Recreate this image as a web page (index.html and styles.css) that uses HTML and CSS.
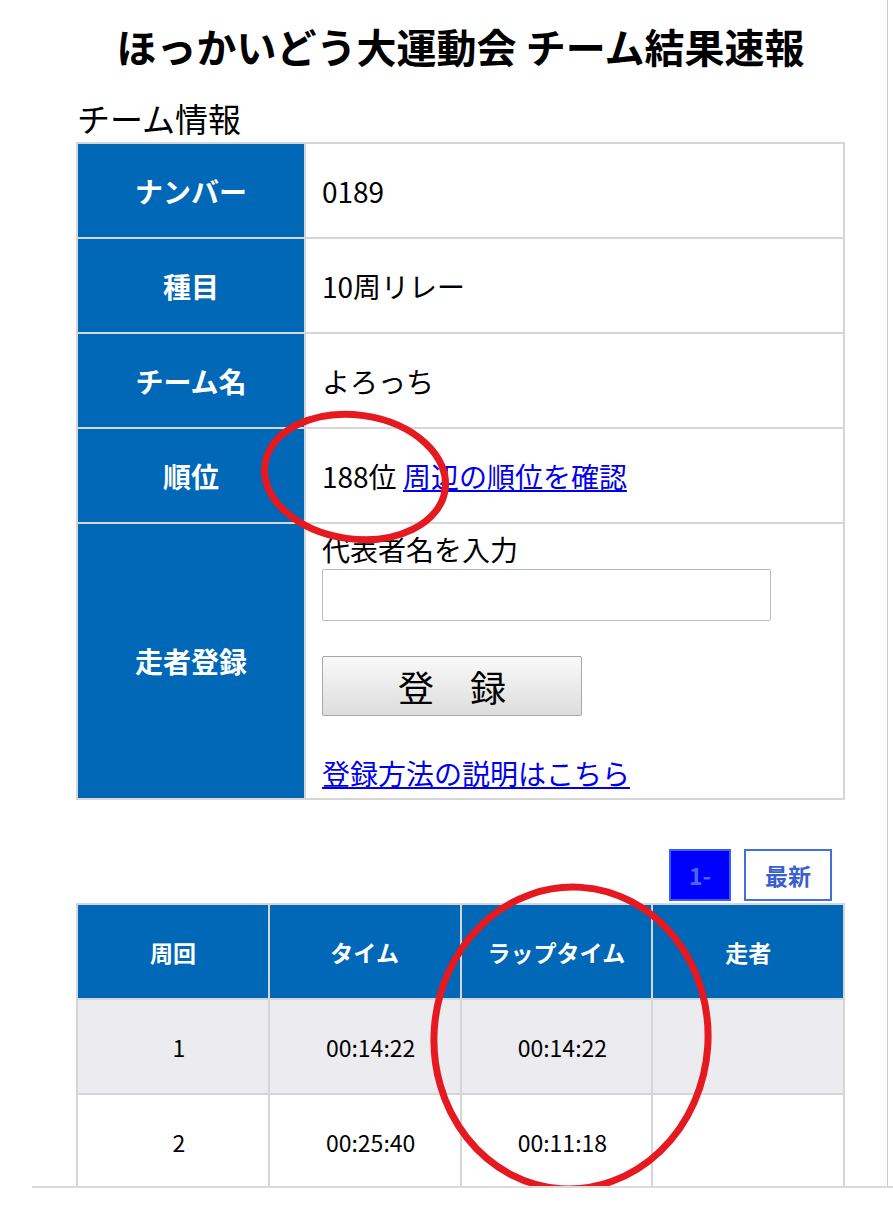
FILE: index.html
```html
<!DOCTYPE html>
<html lang="ja">
<head>
    <meta charset="UTF-8">
    <title>チーム結果速報</title>
    <link rel="stylesheet" href="styles.css">
</head>
<body>
    <div id="screen">
        <div id="wrap">
            <h1>ほっかいどう大運動会 チーム結果速報</h1>

            <h2>チーム情報</h2>
            <table class="info">
                <tr>
                    <th>ナンバー</th>
                    <td>0189</td>
                </tr>
                <tr>
                    <th>種目</th>
                    <td>10周リレー</td>
                </tr>
                <tr>
                    <th>チーム名</th>
                    <td>よろっち</td>
                </tr>
                <tr>
                    <th>順位</th>
                    <td>188位 <a href="#">周辺の順位を確認</a></td>
                </tr>
                <tr>
                    <th>走者登録</th>
                    <td class="entry">
                        <label for="runner">代表者名を入力</label>
                        <input type="text" id="runner">
                        <button>登　録</button>
                        <a href="#">登録方法の説明はこちら</a>
                    </td>
                </tr>
            </table>

            <div class="pager">
                <span class="page on">1-</span>
                <span class="page">最新</span>
            </div>

            <table class="laps">
                <tr>
                    <th>周回</th>
                    <th>タイム</th>
                    <th>ラップタイム</th>
                    <th>走者</th>
                </tr>
                <tr class="odd">
                    <td>1</td>
                    <td>00:14:22</td>
                    <td>00:14:22</td>
                    <td></td>
                </tr>
                <tr>
                    <td>2</td>
                    <td>00:25:40</td>
                    <td>00:11:18</td>
                    <td></td>
                </tr>
            </table>
        </div>

        <!-- 赤丸の書き込み -->
        <svg class="marks" width="887" height="1188" viewBox="0 0 887 1188">
            <ellipse cx="355" cy="477" rx="91" ry="62" transform="rotate(8 355 477)"/>
            <ellipse cx="571" cy="1038" rx="137" ry="151" transform="rotate(4 571 1038)"/>
        </svg>
    </div>
    <div class="bottom-line"></div>
</body>
</html>
```

FILE: styles.css
```css
body{
    margin: 0;
    font-family: "Noto Sans CJK JP", "Noto Sans", sans-serif;
    color: #000;
}

#screen{
    position: relative;
    width: 887px;
    height: 1188px;
    overflow: hidden;
    border-right: 1px solid #c8c8c8;
}

#wrap{
    width: 769px;
    margin-left: 76px;
}

h1{
    margin: 0;
    padding-top: 18px;
    font-size: 40px;
    line-height: 56px;
    text-align: center;
}

h2{
    margin: 24px 0 4px 1px;
    font-size: 33px;
    font-weight: normal;
    line-height: 40px;
}

table{
    width: 100%;
    border-collapse: collapse;
    border: 2px solid #d6d6d6;
}

th, td{
    padding: 0;
    border: 2px solid #d6d6d6;
}

.info th{
    width: 226px;
    height: 93px;
    background: #0068b6;
    color: #fff;
    font-size: 28px;
    text-align: center;
}

.info td{
    padding-left: 16px;
    font-size: 28px;
}

a{
    color: #0000ee;
}

.info .entry{
    display: flex;
    flex-direction: column;
    align-items: flex-start;
    padding-top: 8px;
    padding-bottom: 8px;
    line-height: 34px;
    border: none;
}

.entry input{
    width: 449px;
    height: 52px;
    margin-top: 3px;
    box-sizing: border-box;
    border: 1px solid #bbb;
    border-radius: 2px;
}

.entry button{
    width: 260px;
    height: 60px;
    margin-top: 35px;
    border: 1px solid #a8a8a8;
    border-radius: 2px;
    background: linear-gradient(#f9f9f9, #dddddd);
    font-family: inherit;
    font-size: 36px;
    line-height: 1;
}

.entry a{
    margin-top: 40px;
}

.pager{
    display: flex;
    justify-content: flex-end;
    gap: 13px;
    margin: 49px 13px 2px 0;
}

.page{
    display: flex;
    justify-content: center;
    align-items: center;
    width: 84px;
    height: 48px;
    border: 2px solid #4470dc;
    color: #3a60d0;
    font-size: 23px;
    font-weight: bold;
}

.page.on{
    width: 58px;
    background: #0000ff;
    border-color: #3a5ef0;
    color: #4a68ee;
}

.laps th, .laps td{
    width: 25%;
    height: 93px;
    text-align: center;
    font-size: 23px;
}

.laps td{
    padding-left: 12px;
}

.laps th{
    background: #0068b6;
    color: #fff;
}

.laps .odd td{
    background: #ececf0;
}

.marks{
    position: absolute;
    top: 0;
    left: 0;
    pointer-events: none;
}

.marks ellipse{
    fill: none;
    stroke: #e51920;
    stroke-width: 7;
}

.bottom-line{
    position: relative;
    margin-top: -2px;
    margin-left: 32px;
    border-top: 2px solid #dadada;
}
```
